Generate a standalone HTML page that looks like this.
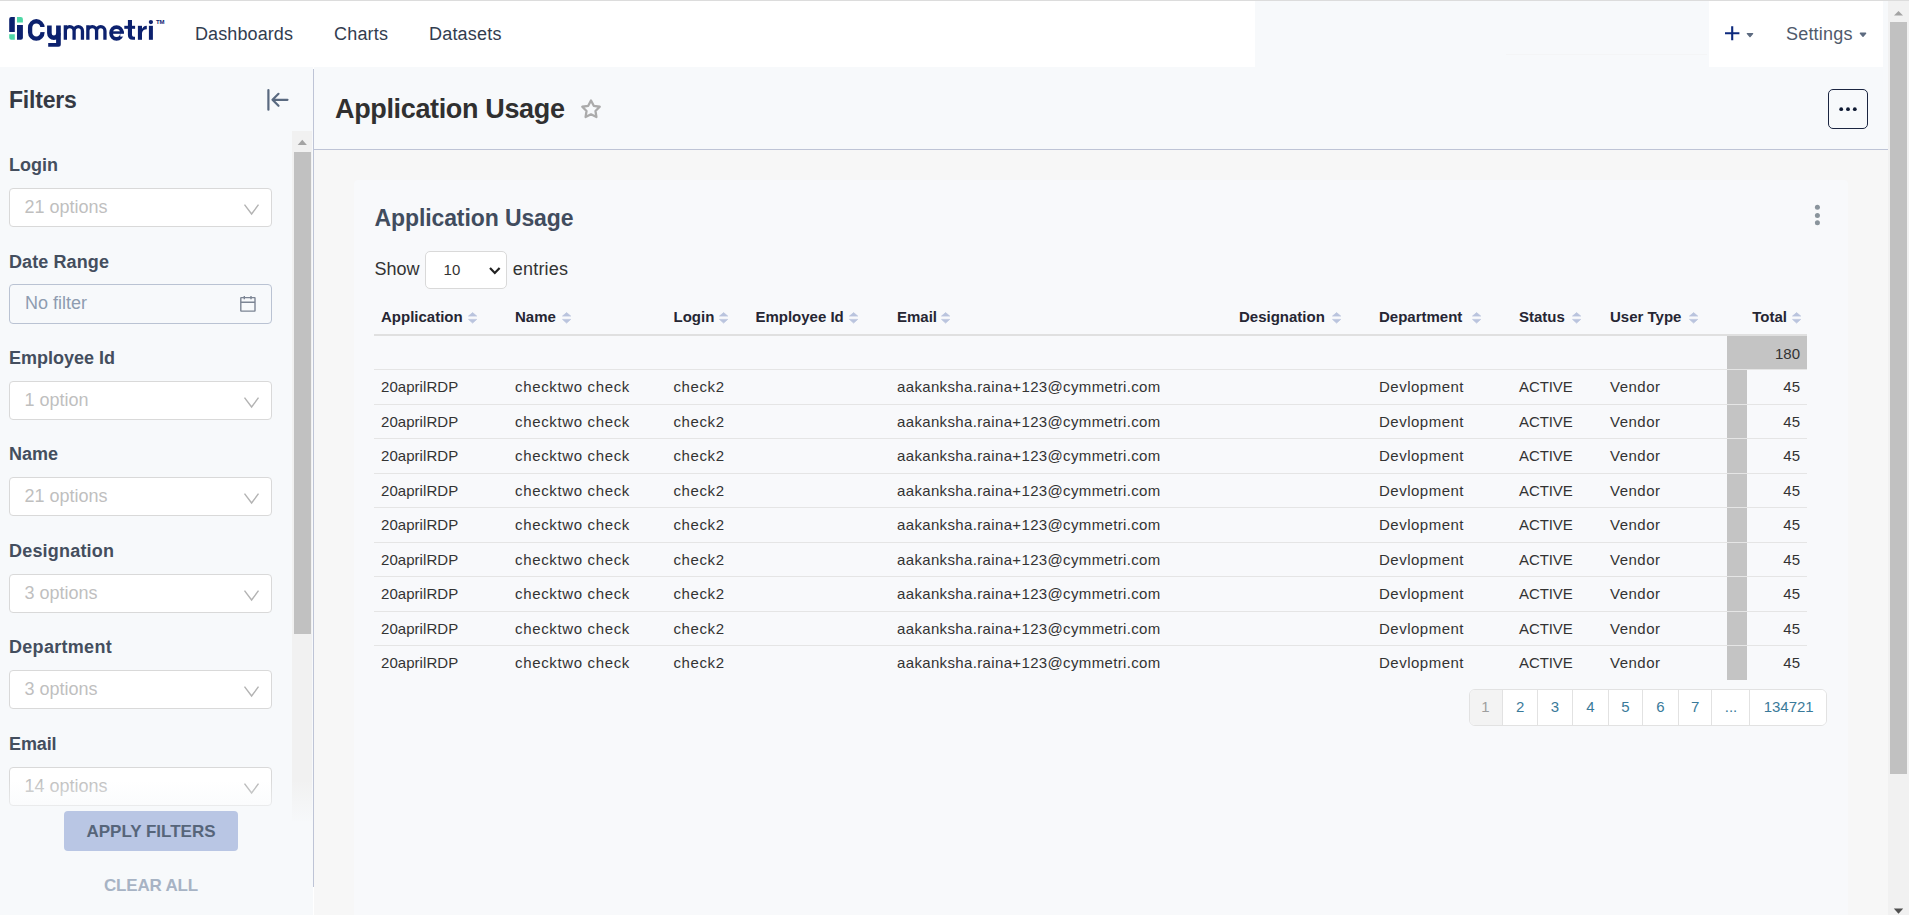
<!DOCTYPE html>
<html><head><meta charset="utf-8"><title>Application Usage</title>
<style>
html,body{margin:0;padding:0;width:1909px;height:915px;overflow:hidden;background:#fff;font-family:"Liberation Sans", sans-serif;}
body>div,body>svg{box-sizing:border-box;}
</style></head><body>
<div style="position:absolute;left:0px;top:0px;width:1909px;height:915px;background:#ffffff;"></div>
<div style="position:absolute;left:0px;top:0px;width:1909px;height:1px;background:#dcdcdc;"></div>
<div style="position:absolute;left:1255px;top:1px;width:454px;height:66px;background:#f7f9fb;"></div>
<div style="position:absolute;left:1883px;top:1px;width:5px;height:66px;background:#f7f9fb;"></div>
<div style="position:absolute;left:1506px;top:54px;width:201px;height:1px;background:#f4f5f6;"></div>
<svg style="position:absolute;left:0;top:0" width="175" height="52">
<path d="M11.2 17 H14.8 V32 H9.2 V19 A2 2 0 0 1 11.2 17 Z" fill="#0c216e"/>
<path d="M9.2 34.3 H14.8 V39.8 H11.2 A2 2 0 0 1 9.2 37.8 Z" fill="#4fd8a6"/>
<path d="M17 17 H20.9 A2 2 0 0 1 22.9 19 V22.5 H17 Z" fill="#4fd8a6"/>
<path d="M17 25 H22.9 V37.8 A2 2 0 0 1 20.9 39.8 H17 Z" fill="#0c216e"/>
<rect x="30.1" y="21.25" width="12.4" height="17.4" rx="6.2" ry="6.4" fill="none" stroke="#0c216e" stroke-width="4.3"/>
<rect x="39.8" y="27" width="6" height="5.1" fill="#fff"/>
<path d="M49.4 25.4 V33.3 A4.5 4.5 0 0 0 58.4 33.3" fill="none" stroke="#0c216e" stroke-width="4.6"/>
<path d="M56.1 25.4 H60.8 V44.2 Q60.8 46.7 58.3 46.7 H48.2 V43.1 H56.1 Z" fill="#0c216e"/>
<g fill="none" stroke="#0c216e" stroke-width="3.3">
<path d="M65.35 39.8 V25.2 M65.35 31 A4.37 4.4 0 0 1 74.1 31 V39.8 M74.1 31 A4.17 4.4 0 0 1 82.45 31 V39.8"/>
<path transform="translate(22.5 0)" d="M65.35 39.8 V25.2 M65.35 31 A4.37 4.4 0 0 1 74.1 31 V39.8 M74.1 31 A4.17 4.4 0 0 1 82.45 31 V39.8"/>
</g>
<ellipse cx="116.55" cy="33" rx="5.45" ry="5.9" fill="none" stroke="#0c216e" stroke-width="3.8"/>
<rect x="111" y="31.3" width="12.9" height="2.5" fill="#0c216e"/>
<rect x="120.3" y="33.8" width="5" height="2.8" fill="#fff"/>
<path d="M127.9 20.1 H132 V35.1 Q132 36.8 133.7 36.8 H135 V39.8 H132.7 Q127.9 39.8 127.9 35.0 Z" fill="#0c216e"/>
<rect x="124.3" y="25.8" width="10.8" height="3" fill="#0c216e"/>
<rect x="137.9" y="25.8" width="4.1" height="14" fill="#0c216e"/>
<path d="M141.5 30.5 Q142.5 25.8 146.8 25.8 V29.2 Q142.5 29.2 142 33 Z" fill="#0c216e"/>
<rect x="148.9" y="25.8" width="4" height="14" fill="#0c216e"/>
<circle cx="150.9" cy="22.1" r="2.15" fill="#0c216e"/>
</svg>
<div style="position:absolute;left:156px;top:19px;font-size:6px;line-height:6px;color:#0c216e;font-weight:bold;letter-spacing:-0.1px;white-space:nowrap;">TM</div>
<div style="position:absolute;left:195px;top:25px;font-size:18px;line-height:18px;color:#323d4f;font-weight:normal;letter-spacing:0.1px;white-space:nowrap;">Dashboards</div>
<div style="position:absolute;left:334px;top:25px;font-size:18px;line-height:18px;color:#323d4f;font-weight:normal;letter-spacing:0.2px;white-space:nowrap;">Charts</div>
<div style="position:absolute;left:429px;top:25px;font-size:18px;line-height:18px;color:#323d4f;font-weight:normal;letter-spacing:0.2px;white-space:nowrap;">Datasets</div>
<svg style="position:absolute;left:1722px;top:23px" width="40" height="20">
<path d="M10.2 3.2 V17.3 M3 10.2 H17.4" stroke="#0d2a7e" stroke-width="2.1"/>
<path d="M25.4 10.6 H30.6 L28 13.6 Z" fill="#5d6b80" stroke="#5d6b80" stroke-width="1.4" stroke-linejoin="round"/>
</svg>
<div style="position:absolute;left:1786px;top:25px;font-size:18px;line-height:18px;color:#4f5a6b;font-weight:normal;letter-spacing:0.2px;white-space:nowrap;">Settings</div>
<svg style="position:absolute;left:1855px;top:23px" width="20" height="20">
<path d="M5.4 10.2 H10.6 L8 13.2 Z" fill="#5d6b80" stroke="#5d6b80" stroke-width="1.4" stroke-linejoin="round"/>
</svg>
<div style="position:absolute;left:0px;top:67px;width:313px;height:848px;background:#f7f9fb;"></div>
<div style="position:absolute;left:313px;top:69px;width:1px;height:818px;background:#bec4d6;"></div>
<div style="position:absolute;left:9px;top:89px;font-size:23px;line-height:23px;color:#353a44;font-weight:bold;letter-spacing:-0.2px;white-space:nowrap;">Filters</div>
<svg style="position:absolute;left:262px;top:86px" width="32" height="28">
<path d="M6.4 4 V23.7" stroke="#5a6a80" stroke-width="2.2" stroke-linecap="round"/>
<path d="M11 13.8 H25.5 M16.5 7.8 L10.5 13.8 L16.5 19.8" stroke="#5a6a80" stroke-width="2.2" fill="none" stroke-linecap="round" stroke-linejoin="round"/>
</svg>
<div style="position:absolute;left:9px;top:156px;font-size:18px;line-height:18px;color:#444e5e;font-weight:bold;letter-spacing:0px;white-space:nowrap;">Login</div>
<div style="position:absolute;left:9px;top:188px;width:263px;height:39px;background:#ffffff;box-sizing:border-box;border:1px solid #d9d9d9;border-radius:4px;"></div>
<div style="position:absolute;left:24.5px;top:198px;font-size:18px;line-height:18px;color:#bfbfbf;font-weight:normal;letter-spacing:0px;white-space:nowrap;">21 options</div>
<svg style="position:absolute;left:242px;top:200px" width="20" height="16">
<path d="M2.5 4.7 L9.6 14 L16.5 4.7" stroke="#b3b3b3" stroke-width="1.4" fill="none"/>
</svg>
<div style="position:absolute;left:9px;top:253px;font-size:18px;line-height:18px;color:#444e5e;font-weight:bold;letter-spacing:0.1px;white-space:nowrap;">Date Range</div>
<div style="position:absolute;left:9px;top:284px;width:263px;height:40px;background:#f7f9fb;box-sizing:border-box;border:1px solid #bac3d3;border-radius:4px;"></div>
<div style="position:absolute;left:25px;top:294px;font-size:18px;line-height:18px;color:#8e9cb0;font-weight:normal;letter-spacing:0px;white-space:nowrap;">No filter</div>
<svg style="position:absolute;left:236px;top:293px" width="22" height="22">
<rect x="4.8" y="4.6" width="14.2" height="13.5" rx="0.3" fill="none" stroke="#7c8594" stroke-width="1.4"/>
<path d="M4.8 9.2 H19 M8.3 3 V6.3 M15 3 V6.3" stroke="#7c8594" stroke-width="1.4"/>
</svg>
<div style="position:absolute;left:9px;top:349px;font-size:18px;line-height:18px;color:#444e5e;font-weight:bold;letter-spacing:0px;white-space:nowrap;">Employee Id</div>
<div style="position:absolute;left:9px;top:381px;width:263px;height:39px;background:#ffffff;box-sizing:border-box;border:1px solid #d9d9d9;border-radius:4px;"></div>
<div style="position:absolute;left:24.5px;top:391px;font-size:18px;line-height:18px;color:#bfbfbf;font-weight:normal;letter-spacing:0px;white-space:nowrap;">1 option</div>
<svg style="position:absolute;left:242px;top:393px" width="20" height="16">
<path d="M2.5 4.7 L9.6 14 L16.5 4.7" stroke="#b3b3b3" stroke-width="1.4" fill="none"/>
</svg>
<div style="position:absolute;left:9px;top:445px;font-size:18px;line-height:18px;color:#444e5e;font-weight:bold;letter-spacing:0px;white-space:nowrap;">Name</div>
<div style="position:absolute;left:9px;top:477px;width:263px;height:39px;background:#ffffff;box-sizing:border-box;border:1px solid #d9d9d9;border-radius:4px;"></div>
<div style="position:absolute;left:24.5px;top:487px;font-size:18px;line-height:18px;color:#bfbfbf;font-weight:normal;letter-spacing:0px;white-space:nowrap;">21 options</div>
<svg style="position:absolute;left:242px;top:489px" width="20" height="16">
<path d="M2.5 4.7 L9.6 14 L16.5 4.7" stroke="#b3b3b3" stroke-width="1.4" fill="none"/>
</svg>
<div style="position:absolute;left:9px;top:542px;font-size:18px;line-height:18px;color:#444e5e;font-weight:bold;letter-spacing:0.2px;white-space:nowrap;">Designation</div>
<div style="position:absolute;left:9px;top:574px;width:263px;height:39px;background:#ffffff;box-sizing:border-box;border:1px solid #d9d9d9;border-radius:4px;"></div>
<div style="position:absolute;left:24.5px;top:584px;font-size:18px;line-height:18px;color:#bfbfbf;font-weight:normal;letter-spacing:0px;white-space:nowrap;">3 options</div>
<svg style="position:absolute;left:242px;top:586px" width="20" height="16">
<path d="M2.5 4.7 L9.6 14 L16.5 4.7" stroke="#b3b3b3" stroke-width="1.4" fill="none"/>
</svg>
<div style="position:absolute;left:9px;top:638px;font-size:18px;line-height:18px;color:#444e5e;font-weight:bold;letter-spacing:0.3px;white-space:nowrap;">Department</div>
<div style="position:absolute;left:9px;top:670px;width:263px;height:39px;background:#ffffff;box-sizing:border-box;border:1px solid #d9d9d9;border-radius:4px;"></div>
<div style="position:absolute;left:24.5px;top:680px;font-size:18px;line-height:18px;color:#bfbfbf;font-weight:normal;letter-spacing:0px;white-space:nowrap;">3 options</div>
<svg style="position:absolute;left:242px;top:682px" width="20" height="16">
<path d="M2.5 4.7 L9.6 14 L16.5 4.7" stroke="#b3b3b3" stroke-width="1.4" fill="none"/>
</svg>
<div style="position:absolute;left:9px;top:735px;font-size:18px;line-height:18px;color:#444e5e;font-weight:bold;letter-spacing:-0.1px;white-space:nowrap;">Email</div>
<div style="position:absolute;left:9px;top:767px;width:263px;height:39px;background:#ffffff;box-sizing:border-box;border:1px solid #d9d9d9;border-radius:4px;"></div>
<div style="position:absolute;left:24.5px;top:777px;font-size:18px;line-height:18px;color:#bfbfbf;font-weight:normal;letter-spacing:0px;white-space:nowrap;">14 options</div>
<svg style="position:absolute;left:242px;top:779px" width="20" height="16">
<path d="M2.5 4.7 L9.6 14 L16.5 4.7" stroke="#b3b3b3" stroke-width="1.4" fill="none"/>
</svg>
<div style="position:absolute;left:292px;top:131px;width:20px;height:690px;background:#f1f1f1;"></div>
<div style="position:absolute;left:294px;top:152px;width:17px;height:482px;background:#c1c1c1;"></div>
<svg style="position:absolute;left:292px;top:131px" width="20" height="20">
<path d="M5.7 14 L10.3 8.8 L14.9 14 Z" fill="#a3a3a3"/>
</svg>
<div style="position:absolute;left:0px;top:780px;width:313px;height:45px;background:linear-gradient(rgba(247,249,251,0), rgba(247,249,251,1));"></div>
<div style="position:absolute;left:64px;top:811px;width:174px;height:40px;background:#b9c6e4;border-radius:4px;"></div>
<div style="position:absolute;left:151px;top:823px;font-size:17px;line-height:17px;color:#56657a;font-weight:bold;letter-spacing:0px;white-space:nowrap;transform:translateX(-50%);">APPLY FILTERS</div>
<div style="position:absolute;left:151px;top:877px;font-size:17px;line-height:17px;color:#a7b3c4;font-weight:bold;letter-spacing:-0.2px;white-space:nowrap;transform:translateX(-50%);">CLEAR ALL</div>
<div style="position:absolute;left:314px;top:67px;width:1574px;height:82px;background:#f7f9fb;"></div>
<div style="position:absolute;left:314px;top:149px;width:1574px;height:1px;background:#bec4d6;"></div>
<div style="position:absolute;left:335px;top:96px;font-size:27px;line-height:27px;color:#303030;font-weight:bold;letter-spacing:-0.35px;white-space:nowrap;">Application Usage</div>
<svg style="position:absolute;left:578px;top:96px" width="26" height="26">
<path d="M13.00 4.40 L15.76 9.80 L21.75 10.76 L17.47 15.05 L18.41 21.04 L13.00 18.30 L7.59 21.04 L8.53 15.05 L4.25 10.76 L10.24 9.80 Z" fill="none" stroke="#ababab" stroke-width="2.3" stroke-linejoin="round"/>
</svg>
<div style="position:absolute;left:1828px;top:89px;width:40px;height:40px;background:transparent;box-sizing:border-box;border:1.5px solid #1b2541;border-radius:5px;"></div>
<svg style="position:absolute;left:1828px;top:89px" width="40" height="40">
<circle cx="13.2" cy="20.2" r="1.9" fill="#0f1a33"/><circle cx="20" cy="20.2" r="1.9" fill="#0f1a33"/><circle cx="26.8" cy="20.2" r="1.9" fill="#0f1a33"/>
</svg>
<div style="position:absolute;left:314px;top:150px;width:1574px;height:765px;background:#f7f7f7;"></div>
<div style="position:absolute;left:1888px;top:1px;width:21px;height:914px;background:#f1f1f1;"></div>
<div style="position:absolute;left:1890px;top:22px;width:17px;height:752px;background:#c1c1c1;"></div>
<svg style="position:absolute;left:1888px;top:1px" width="21" height="20">
<path d="M6 14.5 L10.5 10 L15 14.5 Z" fill="#a3a3a3"/>
</svg>
<svg style="position:absolute;left:1888px;top:903px" width="21" height="12">
<path d="M5.8 5.5 L10.5 10.8 L15.2 5.5 Z" fill="#505050"/>
</svg>
<div style="position:absolute;left:354px;top:180px;width:1494px;height:745px;background:#f8f9fb;border-radius:4px;"></div>
<div style="position:absolute;left:374.5px;top:207px;font-size:23px;line-height:23px;color:#414c5e;font-weight:bold;letter-spacing:-0.1px;white-space:nowrap;">Application Usage</div>
<svg style="position:absolute;left:1810px;top:200px" width="16" height="30">
<circle cx="7.4" cy="7.3" r="2.5" fill="#8a949c"/><circle cx="7.4" cy="15.5" r="2.5" fill="#8a949c"/><circle cx="7.4" cy="22.7" r="2.5" fill="#8a949c"/>
</svg>
<div style="position:absolute;left:374.5px;top:260px;font-size:18px;line-height:18px;color:#333;font-weight:normal;letter-spacing:0px;white-space:nowrap;">Show</div>
<div style="position:absolute;left:425.4px;top:251.3px;width:81.5px;height:37.5px;background:#ffffff;box-sizing:border-box;border:1px solid #d9d9d9;border-radius:5px;"></div>
<div style="position:absolute;left:443.6px;top:262px;font-size:15px;line-height:15px;color:#333;font-weight:normal;letter-spacing:0px;white-space:nowrap;">10</div>
<svg style="position:absolute;left:486px;top:263px" width="18" height="14">
<path d="M4 5 L8.8 10 L13.6 5" stroke="#222" stroke-width="2.2" fill="none"/>
</svg>
<div style="position:absolute;left:512.8px;top:260px;font-size:18px;line-height:18px;color:#333;font-weight:normal;letter-spacing:0.2px;white-space:nowrap;">entries</div>
<div style="position:absolute;left:381px;top:309px;font-size:15px;line-height:15px;color:#262633;font-weight:bold;letter-spacing:0px;white-space:nowrap;">Application</div>
<div style="position:absolute;left:515px;top:309px;font-size:15px;line-height:15px;color:#262633;font-weight:bold;letter-spacing:0px;white-space:nowrap;">Name</div>
<div style="position:absolute;left:673.5px;top:309px;font-size:15px;line-height:15px;color:#262633;font-weight:bold;letter-spacing:0px;white-space:nowrap;">Login</div>
<div style="position:absolute;left:755.4px;top:309px;font-size:15px;line-height:15px;color:#262633;font-weight:bold;letter-spacing:0px;white-space:nowrap;">Employee Id</div>
<div style="position:absolute;left:897px;top:309px;font-size:15px;line-height:15px;color:#262633;font-weight:bold;letter-spacing:0px;white-space:nowrap;">Email</div>
<div style="position:absolute;left:1239px;top:309px;font-size:15px;line-height:15px;color:#262633;font-weight:bold;letter-spacing:0px;white-space:nowrap;">Designation</div>
<div style="position:absolute;left:1379px;top:309px;font-size:15px;line-height:15px;color:#262633;font-weight:bold;letter-spacing:0px;white-space:nowrap;">Department</div>
<div style="position:absolute;left:1519px;top:309px;font-size:15px;line-height:15px;color:#262633;font-weight:bold;letter-spacing:0px;white-space:nowrap;">Status</div>
<div style="position:absolute;left:1610px;top:309px;font-size:15px;line-height:15px;color:#262633;font-weight:bold;letter-spacing:0px;white-space:nowrap;">User Type</div>
<div style="position:absolute;right:122px;top:309px;font-size:15px;line-height:15px;color:#262633;font-weight:bold;letter-spacing:0px;white-space:nowrap;">Total</div>
<svg style="position:absolute;left:467.7px;top:312px" width="10" height="12"><path d="M4.6 0.6 L8.7 4.1 H0.5 Z M4.6 11.1 L8.7 7.4 H0.5 Z" fill="#bac4de" stroke="#bac4de" stroke-width="0.7" stroke-linejoin="round"/></svg>
<svg style="position:absolute;left:561.9000000000001px;top:312px" width="10" height="12"><path d="M4.6 0.6 L8.7 4.1 H0.5 Z M4.6 11.1 L8.7 7.4 H0.5 Z" fill="#bac4de" stroke="#bac4de" stroke-width="0.7" stroke-linejoin="round"/></svg>
<svg style="position:absolute;left:718.5px;top:312px" width="10" height="12"><path d="M4.6 0.6 L8.7 4.1 H0.5 Z M4.6 11.1 L8.7 7.4 H0.5 Z" fill="#bac4de" stroke="#bac4de" stroke-width="0.7" stroke-linejoin="round"/></svg>
<svg style="position:absolute;left:849.1px;top:312px" width="10" height="12"><path d="M4.6 0.6 L8.7 4.1 H0.5 Z M4.6 11.1 L8.7 7.4 H0.5 Z" fill="#bac4de" stroke="#bac4de" stroke-width="0.7" stroke-linejoin="round"/></svg>
<svg style="position:absolute;left:940.7px;top:312px" width="10" height="12"><path d="M4.6 0.6 L8.7 4.1 H0.5 Z M4.6 11.1 L8.7 7.4 H0.5 Z" fill="#bac4de" stroke="#bac4de" stroke-width="0.7" stroke-linejoin="round"/></svg>
<svg style="position:absolute;left:1331.7px;top:312px" width="10" height="12"><path d="M4.6 0.6 L8.7 4.1 H0.5 Z M4.6 11.1 L8.7 7.4 H0.5 Z" fill="#bac4de" stroke="#bac4de" stroke-width="0.7" stroke-linejoin="round"/></svg>
<svg style="position:absolute;left:1471.7px;top:312px" width="10" height="12"><path d="M4.6 0.6 L8.7 4.1 H0.5 Z M4.6 11.1 L8.7 7.4 H0.5 Z" fill="#bac4de" stroke="#bac4de" stroke-width="0.7" stroke-linejoin="round"/></svg>
<svg style="position:absolute;left:1571.7px;top:312px" width="10" height="12"><path d="M4.6 0.6 L8.7 4.1 H0.5 Z M4.6 11.1 L8.7 7.4 H0.5 Z" fill="#bac4de" stroke="#bac4de" stroke-width="0.7" stroke-linejoin="round"/></svg>
<svg style="position:absolute;left:1688.7px;top:312px" width="10" height="12"><path d="M4.6 0.6 L8.7 4.1 H0.5 Z M4.6 11.1 L8.7 7.4 H0.5 Z" fill="#bac4de" stroke="#bac4de" stroke-width="0.7" stroke-linejoin="round"/></svg>
<svg style="position:absolute;left:1791.7px;top:312px" width="10" height="12"><path d="M4.6 0.6 L8.7 4.1 H0.5 Z M4.6 11.1 L8.7 7.4 H0.5 Z" fill="#bac4de" stroke="#bac4de" stroke-width="0.7" stroke-linejoin="round"/></svg>
<div style="position:absolute;left:374px;top:334px;width:1433px;height:2px;background:#e0e0e0;"></div>
<div style="position:absolute;left:1727px;top:336px;width:80px;height:33px;background:#c4c4c4;"></div>
<div style="position:absolute;right:109px;top:346px;font-size:15px;line-height:15px;color:#333;font-weight:normal;letter-spacing:0px;white-space:nowrap;">180</div>
<div style="position:absolute;left:374px;top:369px;width:1433px;height:1px;background:#e5e5e5;"></div>
<div style="position:absolute;left:1727px;top:370.0px;width:20px;height:33.5px;background:#c4c4c4;"></div>
<div style="position:absolute;left:381px;top:379px;font-size:15px;line-height:15px;color:#333;font-weight:normal;letter-spacing:0.05px;white-space:nowrap;">20aprilRDP</div>
<div style="position:absolute;left:515px;top:379px;font-size:15px;line-height:15px;color:#333;font-weight:normal;letter-spacing:0.65px;white-space:nowrap;">checktwo check</div>
<div style="position:absolute;left:673.5px;top:379px;font-size:15px;line-height:15px;color:#333;font-weight:normal;letter-spacing:0.6px;white-space:nowrap;">check2</div>
<div style="position:absolute;left:897px;top:379px;font-size:15px;line-height:15px;color:#333;font-weight:normal;letter-spacing:0.35px;white-space:nowrap;">aakanksha.raina+123@cymmetri.com</div>
<div style="position:absolute;left:1379px;top:379px;font-size:15px;line-height:15px;color:#333;font-weight:normal;letter-spacing:0.5px;white-space:nowrap;">Devlopment</div>
<div style="position:absolute;left:1519px;top:379px;font-size:15px;line-height:15px;color:#333;font-weight:normal;letter-spacing:-0.1px;white-space:nowrap;">ACTIVE</div>
<div style="position:absolute;left:1610px;top:379px;font-size:15px;line-height:15px;color:#333;font-weight:normal;letter-spacing:0.5px;white-space:nowrap;">Vendor</div>
<div style="position:absolute;right:109px;top:379px;font-size:15px;line-height:15px;color:#333;font-weight:normal;letter-spacing:0px;white-space:nowrap;">45</div>
<div style="position:absolute;left:374px;top:403.5px;width:1433px;height:1px;background:#e5e5e5;"></div>
<div style="position:absolute;left:1727px;top:404.5px;width:20px;height:33.5px;background:#c4c4c4;"></div>
<div style="position:absolute;left:381px;top:414px;font-size:15px;line-height:15px;color:#333;font-weight:normal;letter-spacing:0.05px;white-space:nowrap;">20aprilRDP</div>
<div style="position:absolute;left:515px;top:414px;font-size:15px;line-height:15px;color:#333;font-weight:normal;letter-spacing:0.65px;white-space:nowrap;">checktwo check</div>
<div style="position:absolute;left:673.5px;top:414px;font-size:15px;line-height:15px;color:#333;font-weight:normal;letter-spacing:0.6px;white-space:nowrap;">check2</div>
<div style="position:absolute;left:897px;top:414px;font-size:15px;line-height:15px;color:#333;font-weight:normal;letter-spacing:0.35px;white-space:nowrap;">aakanksha.raina+123@cymmetri.com</div>
<div style="position:absolute;left:1379px;top:414px;font-size:15px;line-height:15px;color:#333;font-weight:normal;letter-spacing:0.5px;white-space:nowrap;">Devlopment</div>
<div style="position:absolute;left:1519px;top:414px;font-size:15px;line-height:15px;color:#333;font-weight:normal;letter-spacing:-0.1px;white-space:nowrap;">ACTIVE</div>
<div style="position:absolute;left:1610px;top:414px;font-size:15px;line-height:15px;color:#333;font-weight:normal;letter-spacing:0.5px;white-space:nowrap;">Vendor</div>
<div style="position:absolute;right:109px;top:414px;font-size:15px;line-height:15px;color:#333;font-weight:normal;letter-spacing:0px;white-space:nowrap;">45</div>
<div style="position:absolute;left:374px;top:438.0px;width:1433px;height:1px;background:#e5e5e5;"></div>
<div style="position:absolute;left:1727px;top:439.0px;width:20px;height:33.5px;background:#c4c4c4;"></div>
<div style="position:absolute;left:381px;top:448px;font-size:15px;line-height:15px;color:#333;font-weight:normal;letter-spacing:0.05px;white-space:nowrap;">20aprilRDP</div>
<div style="position:absolute;left:515px;top:448px;font-size:15px;line-height:15px;color:#333;font-weight:normal;letter-spacing:0.65px;white-space:nowrap;">checktwo check</div>
<div style="position:absolute;left:673.5px;top:448px;font-size:15px;line-height:15px;color:#333;font-weight:normal;letter-spacing:0.6px;white-space:nowrap;">check2</div>
<div style="position:absolute;left:897px;top:448px;font-size:15px;line-height:15px;color:#333;font-weight:normal;letter-spacing:0.35px;white-space:nowrap;">aakanksha.raina+123@cymmetri.com</div>
<div style="position:absolute;left:1379px;top:448px;font-size:15px;line-height:15px;color:#333;font-weight:normal;letter-spacing:0.5px;white-space:nowrap;">Devlopment</div>
<div style="position:absolute;left:1519px;top:448px;font-size:15px;line-height:15px;color:#333;font-weight:normal;letter-spacing:-0.1px;white-space:nowrap;">ACTIVE</div>
<div style="position:absolute;left:1610px;top:448px;font-size:15px;line-height:15px;color:#333;font-weight:normal;letter-spacing:0.5px;white-space:nowrap;">Vendor</div>
<div style="position:absolute;right:109px;top:448px;font-size:15px;line-height:15px;color:#333;font-weight:normal;letter-spacing:0px;white-space:nowrap;">45</div>
<div style="position:absolute;left:374px;top:472.5px;width:1433px;height:1px;background:#e5e5e5;"></div>
<div style="position:absolute;left:1727px;top:473.5px;width:20px;height:33.5px;background:#c4c4c4;"></div>
<div style="position:absolute;left:381px;top:483px;font-size:15px;line-height:15px;color:#333;font-weight:normal;letter-spacing:0.05px;white-space:nowrap;">20aprilRDP</div>
<div style="position:absolute;left:515px;top:483px;font-size:15px;line-height:15px;color:#333;font-weight:normal;letter-spacing:0.65px;white-space:nowrap;">checktwo check</div>
<div style="position:absolute;left:673.5px;top:483px;font-size:15px;line-height:15px;color:#333;font-weight:normal;letter-spacing:0.6px;white-space:nowrap;">check2</div>
<div style="position:absolute;left:897px;top:483px;font-size:15px;line-height:15px;color:#333;font-weight:normal;letter-spacing:0.35px;white-space:nowrap;">aakanksha.raina+123@cymmetri.com</div>
<div style="position:absolute;left:1379px;top:483px;font-size:15px;line-height:15px;color:#333;font-weight:normal;letter-spacing:0.5px;white-space:nowrap;">Devlopment</div>
<div style="position:absolute;left:1519px;top:483px;font-size:15px;line-height:15px;color:#333;font-weight:normal;letter-spacing:-0.1px;white-space:nowrap;">ACTIVE</div>
<div style="position:absolute;left:1610px;top:483px;font-size:15px;line-height:15px;color:#333;font-weight:normal;letter-spacing:0.5px;white-space:nowrap;">Vendor</div>
<div style="position:absolute;right:109px;top:483px;font-size:15px;line-height:15px;color:#333;font-weight:normal;letter-spacing:0px;white-space:nowrap;">45</div>
<div style="position:absolute;left:374px;top:507.0px;width:1433px;height:1px;background:#e5e5e5;"></div>
<div style="position:absolute;left:1727px;top:508.0px;width:20px;height:33.5px;background:#c4c4c4;"></div>
<div style="position:absolute;left:381px;top:517px;font-size:15px;line-height:15px;color:#333;font-weight:normal;letter-spacing:0.05px;white-space:nowrap;">20aprilRDP</div>
<div style="position:absolute;left:515px;top:517px;font-size:15px;line-height:15px;color:#333;font-weight:normal;letter-spacing:0.65px;white-space:nowrap;">checktwo check</div>
<div style="position:absolute;left:673.5px;top:517px;font-size:15px;line-height:15px;color:#333;font-weight:normal;letter-spacing:0.6px;white-space:nowrap;">check2</div>
<div style="position:absolute;left:897px;top:517px;font-size:15px;line-height:15px;color:#333;font-weight:normal;letter-spacing:0.35px;white-space:nowrap;">aakanksha.raina+123@cymmetri.com</div>
<div style="position:absolute;left:1379px;top:517px;font-size:15px;line-height:15px;color:#333;font-weight:normal;letter-spacing:0.5px;white-space:nowrap;">Devlopment</div>
<div style="position:absolute;left:1519px;top:517px;font-size:15px;line-height:15px;color:#333;font-weight:normal;letter-spacing:-0.1px;white-space:nowrap;">ACTIVE</div>
<div style="position:absolute;left:1610px;top:517px;font-size:15px;line-height:15px;color:#333;font-weight:normal;letter-spacing:0.5px;white-space:nowrap;">Vendor</div>
<div style="position:absolute;right:109px;top:517px;font-size:15px;line-height:15px;color:#333;font-weight:normal;letter-spacing:0px;white-space:nowrap;">45</div>
<div style="position:absolute;left:374px;top:541.5px;width:1433px;height:1px;background:#e5e5e5;"></div>
<div style="position:absolute;left:1727px;top:542.5px;width:20px;height:33.5px;background:#c4c4c4;"></div>
<div style="position:absolute;left:381px;top:552px;font-size:15px;line-height:15px;color:#333;font-weight:normal;letter-spacing:0.05px;white-space:nowrap;">20aprilRDP</div>
<div style="position:absolute;left:515px;top:552px;font-size:15px;line-height:15px;color:#333;font-weight:normal;letter-spacing:0.65px;white-space:nowrap;">checktwo check</div>
<div style="position:absolute;left:673.5px;top:552px;font-size:15px;line-height:15px;color:#333;font-weight:normal;letter-spacing:0.6px;white-space:nowrap;">check2</div>
<div style="position:absolute;left:897px;top:552px;font-size:15px;line-height:15px;color:#333;font-weight:normal;letter-spacing:0.35px;white-space:nowrap;">aakanksha.raina+123@cymmetri.com</div>
<div style="position:absolute;left:1379px;top:552px;font-size:15px;line-height:15px;color:#333;font-weight:normal;letter-spacing:0.5px;white-space:nowrap;">Devlopment</div>
<div style="position:absolute;left:1519px;top:552px;font-size:15px;line-height:15px;color:#333;font-weight:normal;letter-spacing:-0.1px;white-space:nowrap;">ACTIVE</div>
<div style="position:absolute;left:1610px;top:552px;font-size:15px;line-height:15px;color:#333;font-weight:normal;letter-spacing:0.5px;white-space:nowrap;">Vendor</div>
<div style="position:absolute;right:109px;top:552px;font-size:15px;line-height:15px;color:#333;font-weight:normal;letter-spacing:0px;white-space:nowrap;">45</div>
<div style="position:absolute;left:374px;top:576.0px;width:1433px;height:1px;background:#e5e5e5;"></div>
<div style="position:absolute;left:1727px;top:577.0px;width:20px;height:33.5px;background:#c4c4c4;"></div>
<div style="position:absolute;left:381px;top:586px;font-size:15px;line-height:15px;color:#333;font-weight:normal;letter-spacing:0.05px;white-space:nowrap;">20aprilRDP</div>
<div style="position:absolute;left:515px;top:586px;font-size:15px;line-height:15px;color:#333;font-weight:normal;letter-spacing:0.65px;white-space:nowrap;">checktwo check</div>
<div style="position:absolute;left:673.5px;top:586px;font-size:15px;line-height:15px;color:#333;font-weight:normal;letter-spacing:0.6px;white-space:nowrap;">check2</div>
<div style="position:absolute;left:897px;top:586px;font-size:15px;line-height:15px;color:#333;font-weight:normal;letter-spacing:0.35px;white-space:nowrap;">aakanksha.raina+123@cymmetri.com</div>
<div style="position:absolute;left:1379px;top:586px;font-size:15px;line-height:15px;color:#333;font-weight:normal;letter-spacing:0.5px;white-space:nowrap;">Devlopment</div>
<div style="position:absolute;left:1519px;top:586px;font-size:15px;line-height:15px;color:#333;font-weight:normal;letter-spacing:-0.1px;white-space:nowrap;">ACTIVE</div>
<div style="position:absolute;left:1610px;top:586px;font-size:15px;line-height:15px;color:#333;font-weight:normal;letter-spacing:0.5px;white-space:nowrap;">Vendor</div>
<div style="position:absolute;right:109px;top:586px;font-size:15px;line-height:15px;color:#333;font-weight:normal;letter-spacing:0px;white-space:nowrap;">45</div>
<div style="position:absolute;left:374px;top:610.5px;width:1433px;height:1px;background:#e5e5e5;"></div>
<div style="position:absolute;left:1727px;top:611.5px;width:20px;height:33.5px;background:#c4c4c4;"></div>
<div style="position:absolute;left:381px;top:621px;font-size:15px;line-height:15px;color:#333;font-weight:normal;letter-spacing:0.05px;white-space:nowrap;">20aprilRDP</div>
<div style="position:absolute;left:515px;top:621px;font-size:15px;line-height:15px;color:#333;font-weight:normal;letter-spacing:0.65px;white-space:nowrap;">checktwo check</div>
<div style="position:absolute;left:673.5px;top:621px;font-size:15px;line-height:15px;color:#333;font-weight:normal;letter-spacing:0.6px;white-space:nowrap;">check2</div>
<div style="position:absolute;left:897px;top:621px;font-size:15px;line-height:15px;color:#333;font-weight:normal;letter-spacing:0.35px;white-space:nowrap;">aakanksha.raina+123@cymmetri.com</div>
<div style="position:absolute;left:1379px;top:621px;font-size:15px;line-height:15px;color:#333;font-weight:normal;letter-spacing:0.5px;white-space:nowrap;">Devlopment</div>
<div style="position:absolute;left:1519px;top:621px;font-size:15px;line-height:15px;color:#333;font-weight:normal;letter-spacing:-0.1px;white-space:nowrap;">ACTIVE</div>
<div style="position:absolute;left:1610px;top:621px;font-size:15px;line-height:15px;color:#333;font-weight:normal;letter-spacing:0.5px;white-space:nowrap;">Vendor</div>
<div style="position:absolute;right:109px;top:621px;font-size:15px;line-height:15px;color:#333;font-weight:normal;letter-spacing:0px;white-space:nowrap;">45</div>
<div style="position:absolute;left:374px;top:645.0px;width:1433px;height:1px;background:#e5e5e5;"></div>
<div style="position:absolute;left:1727px;top:646.0px;width:20px;height:33.5px;background:#c4c4c4;"></div>
<div style="position:absolute;left:381px;top:655px;font-size:15px;line-height:15px;color:#333;font-weight:normal;letter-spacing:0.05px;white-space:nowrap;">20aprilRDP</div>
<div style="position:absolute;left:515px;top:655px;font-size:15px;line-height:15px;color:#333;font-weight:normal;letter-spacing:0.65px;white-space:nowrap;">checktwo check</div>
<div style="position:absolute;left:673.5px;top:655px;font-size:15px;line-height:15px;color:#333;font-weight:normal;letter-spacing:0.6px;white-space:nowrap;">check2</div>
<div style="position:absolute;left:897px;top:655px;font-size:15px;line-height:15px;color:#333;font-weight:normal;letter-spacing:0.35px;white-space:nowrap;">aakanksha.raina+123@cymmetri.com</div>
<div style="position:absolute;left:1379px;top:655px;font-size:15px;line-height:15px;color:#333;font-weight:normal;letter-spacing:0.5px;white-space:nowrap;">Devlopment</div>
<div style="position:absolute;left:1519px;top:655px;font-size:15px;line-height:15px;color:#333;font-weight:normal;letter-spacing:-0.1px;white-space:nowrap;">ACTIVE</div>
<div style="position:absolute;left:1610px;top:655px;font-size:15px;line-height:15px;color:#333;font-weight:normal;letter-spacing:0.5px;white-space:nowrap;">Vendor</div>
<div style="position:absolute;right:109px;top:655px;font-size:15px;line-height:15px;color:#333;font-weight:normal;letter-spacing:0px;white-space:nowrap;">45</div>
<div style="position:absolute;left:1469.3px;top:689px;width:358px;height:37px;box-sizing:border-box;border:1px solid #e2e2e2;border-radius:6px;background:#ffffff;overflow:hidden">
<div style="position:absolute;left:-1.5px;top:-1px;width:33.3px;height:37px;box-sizing:border-box;background:#f3f3f3;color:#9e9e9e;font-size:15px;line-height:35.5px;text-align:center">1</div>
<div style="position:absolute;left:31.8px;top:-1px;width:35.0px;height:37px;box-sizing:border-box;border-left:1px solid #e2e2e2;background:#ffffff;color:#3a7a9a;font-size:15px;line-height:35.5px;text-align:center">2</div>
<div style="position:absolute;left:66.8px;top:-1px;width:34.9px;height:37px;box-sizing:border-box;border-left:1px solid #e2e2e2;background:#ffffff;color:#3a7a9a;font-size:15px;line-height:35.5px;text-align:center">3</div>
<div style="position:absolute;left:101.7px;top:-1px;width:36.0px;height:37px;box-sizing:border-box;border-left:1px solid #e2e2e2;background:#ffffff;color:#3a7a9a;font-size:15px;line-height:35.5px;text-align:center">4</div>
<div style="position:absolute;left:137.7px;top:-1px;width:34.0px;height:37px;box-sizing:border-box;border-left:1px solid #e2e2e2;background:#ffffff;color:#3a7a9a;font-size:15px;line-height:35.5px;text-align:center">5</div>
<div style="position:absolute;left:171.7px;top:-1px;width:36.0px;height:37px;box-sizing:border-box;border-left:1px solid #e2e2e2;background:#ffffff;color:#3a7a9a;font-size:15px;line-height:35.5px;text-align:center">6</div>
<div style="position:absolute;left:207.7px;top:-1px;width:33.5px;height:37px;box-sizing:border-box;border-left:1px solid #e2e2e2;background:#ffffff;color:#3a7a9a;font-size:15px;line-height:35.5px;text-align:center">7</div>
<div style="position:absolute;left:241.2px;top:-1px;width:38.0px;height:37px;box-sizing:border-box;border-left:1px solid #e2e2e2;background:#ffffff;color:#3a7a9a;font-size:15px;line-height:35.5px;text-align:center">...</div>
<div style="position:absolute;left:279.2px;top:-1px;width:77.4px;height:37px;box-sizing:border-box;border-left:1px solid #e2e2e2;background:#ffffff;color:#3a7a9a;font-size:15px;line-height:35.5px;text-align:center">134721</div>
</div>
</body></html>
